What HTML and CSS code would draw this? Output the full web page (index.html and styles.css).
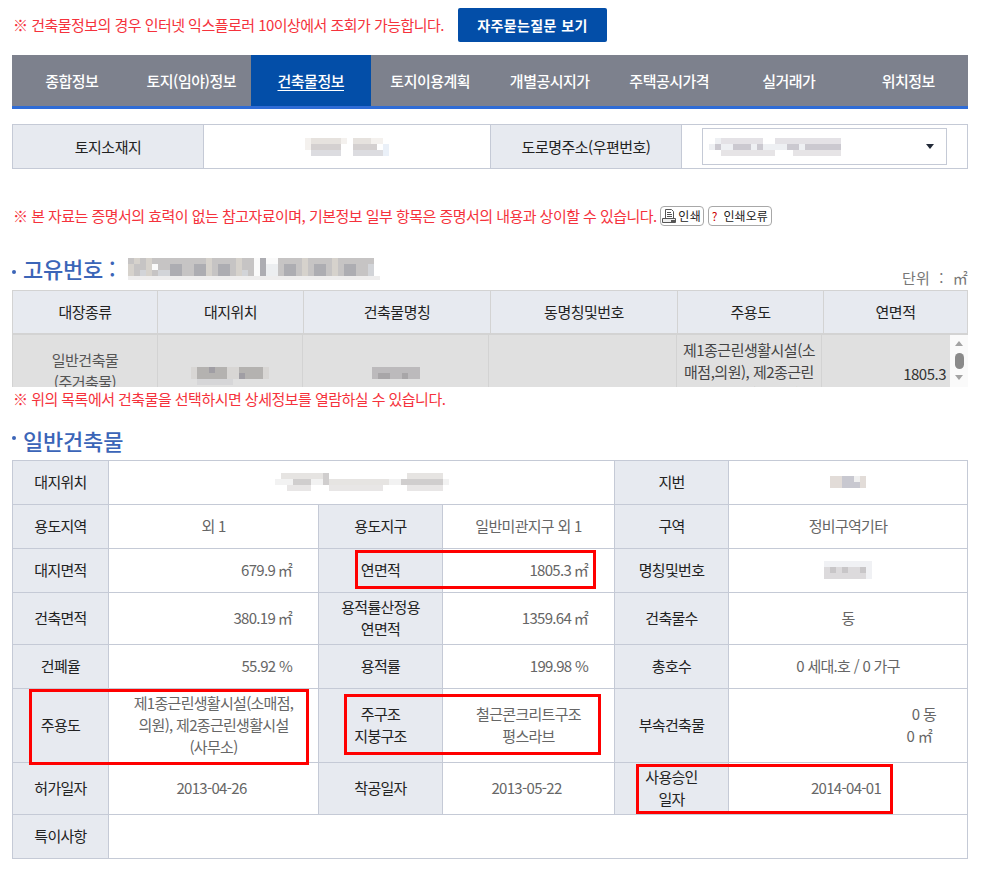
FILE: index.html
```html
<!DOCTYPE html>
<html lang="ko">
<head>
<meta charset="utf-8">
<title>건축물정보</title>
<link rel="stylesheet" href="styles.css">
</head>
<body>
<div class="page">
  <div class="topline">
    <p class="note">※ 건축물정보의 경우 인터넷 익스플로러 10이상에서 조회가 가능합니다.</p>
    <a class="faq">자주묻는질문 보기</a>
  </div>

  <nav class="tabs">
    <a class="tab">종합정보</a>
    <a class="tab">토지(임야)정보</a>
    <a class="tab active">건축물정보</a>
    <a class="tab">토지이용계획</a>
    <a class="tab">개별공시지가</a>
    <a class="tab">주택공시가격</a>
    <a class="tab">실거래가</a>
    <a class="tab">위치정보</a>
  </nav>

  <div class="addr">
    <div class="addr-th">토지소재지</div>
    <div class="addr-td">
      <svg class="mosaic" width="84" height="18" viewBox="0 0 84 18">
        <path fill="#f4f1ee" d="M0 6h6v6H0zM0 0h6v6H0zM36 0h6v6h-6zM66 0h12v6H66z"/>
        <path fill="#e6e2de" d="M6 0h30v6H6zM48 0h18v6H48z"/>
        <path fill="#d4d0d0" d="M6 6h30v6H6zM48 6h24v6H48z"/>
        <path fill="#dcdce0" d="M6 12h30v6H6zM48 12h30v6H48z"/>
        <path fill="#eaf0f8" d="M78 6h6v12h-6z"/>
      </svg>
    </div>
    <div class="addr-th">도로명주소(우편번호)</div>
    <div class="addr-td addr-sel">
      <div class="select">
        <svg class="mosaic mosaic-left" width="138" height="18" viewBox="0 0 138 18">
          <path fill="#eef0f3" d="M0 6h132v6H0zM6 0h12v6H6z"/>
          <path fill="#e4e2e6" d="M12 0h42v6H12zM66 0h66v6H66z"/>
          <path fill="#cbc9d0" d="M6 6h6v6H6zM24 6h18v6H24zM48 6h6v6h-6zM78 6h12v6H78zM96 6h30v6H96zM126 6h6v6h-6z"/>
          <path fill="#e6e4e6" d="M12 12h54v6H12zM84 12h48v6H84z"/>
        </svg>
        <span class="caret"></span>
      </div>
    </div>
  </div>

  <div class="printline">
    <p class="note">※ 본 자료는 증명서의 효력이 없는 참고자료이며, 기본정보 일부 항목은 증명서의 내용과 상이할 수 있습니다.</p>
    <a class="btn btn-print">
      <svg class="printer" width="15" height="15" viewBox="0 0 15 15">
        <path fill="none" stroke="#555" d="M3.5 .5h6l2 2v7h-8zM5 3.5h4M5 5.5h5M5 7.5h5"/>
        <path fill="#eee" stroke="#555" d="M.5 9.5h13v4H.5z"/>
        <path fill="#555" d="M9 11h4v2H9z"/>
      </svg>인쇄</a>
    <a class="btn btn-err"><span class="q">?</span><span>인쇄오류</span></a>
  </div>

  <div class="head-row">
    <h2 class="title title-one"><span class="dot"></span><span>고유번호 :</span><svg class="mosaic title-mosaic" width="252" height="22" viewBox="0 0 252 22">
        <path fill="#eeeded" d="M0 18h252v4H0z"/>
        <path fill="#c6c4c4" d="M0 0h126v18H0zM150 0h96v18h-96z"/>
        <path fill="#d6d2cc" d="M0 6h6v12H0zM6 0h6v6H6zM18 0h6v18h-6zM78 0h6v18h-6zM108 0h6v18h-6zM174 0h6v18h-6zM204 0h6v18h-6z"/>
        <path fill="#fafafa" d="M24 6h6v6h-6zM126 0h6v18h-6zM138 0h12v6h-12z"/>
        <path fill="#eceef0" d="M138 6h12v12h-12z"/>
        <path fill="#d2d4d8" d="M30 12h12v6H30zM12 12h6v6h-6zM114 12h6v6h-6zM240 6h6v12h-6z"/>
        <path fill="#adadb2" d="M42 6h12v12H42zM66 6h12v12H66zM90 6h12v12H90zM132 0h6v18h-6zM156 6h12v12h-12zM186 6h12v12h-12zM216 6h12v12h-12z"/>
      </svg></h2>
    <span class="unit">단위 &nbsp;: &nbsp;㎡</span>
  </div>

  <div class="list-head">
    <div class="lh">대장종류</div>
    <div class="lh">대지위치</div>
    <div class="lh">건축물명칭</div>
    <div class="lh">동명칭및번호</div>
    <div class="lh">주용도</div>
    <div class="lh">연면적</div>
  </div>
  <div class="list-clip">
    <div class="list-body">
      <div class="lb">일반건축물<br>(주거축물)</div>
      <div class="lb lb-low">
        <svg class="mosaic" width="78" height="18" viewBox="0 0 78 18">
          <path fill="#d8d6d4" d="M0 0h78v12H0z"/>
          <path fill="#b4b2b0" d="M6 0h30v12H6zM48 0h24v12H48z"/>
          <path fill="#a09ea4" d="M18 0h6v6h-6zM48 6h6v6h-6z"/>
          <path fill="#d6d6d8" d="M6 12h36v6H6z"/>
        </svg>
      </div>
      <div class="lb lb-mid">
        <svg class="mosaic" width="48" height="12" viewBox="0 0 48 12">
          <path fill="#bcbabc" d="M0 0h48v12H0z"/>
          <path fill="#a8a6a8" d="M6 6h12v6H6zM30 6h6v6h-6z"/>
        </svg>
      </div>
      <div class="lb"></div>
      <div class="lb lb-use">제1종근린생활시설(소<br>매점,의원), 제2종근린<br>생활시설(사무소)</div>
      <div class="lb lb-num">1805.3</div>
    </div>
    <div class="scrollbar">
      <span class="sb-up"></span>
      <span class="sb-thumb"></span>
      <span class="sb-down"></span>
    </div>
  </div>
  <p class="note note-list">※ 위의 목록에서 건축물을 선택하시면 상세정보를 열람하실 수 있습니다.</p>

  <h2 class="title title-two"><span class="dot"></span><span>일반건축물</span></h2>

  <div class="detail-wrap">
    <table class="detail">
      <colgroup>
        <col class="c1"><col class="c2"><col class="c3"><col class="c4"><col class="c5"><col class="c6">
      </colgroup>
      <tr class="h44">
        <th>대지위치</th>
        <td colspan="3">
          <svg class="mosaic" width="174" height="18" viewBox="0 0 174 18">
            <path fill="#f2f2f2" d="M0 6h174v6H0z"/>
            <path fill="#e6e4e2" d="M6 0h48v6H6zM54 6h60v6H54zM132 0h36v6h-36z"/>
            <path fill="#d0cece" d="M48 0h6v12h-6zM126 6h42v6h-42zM18 6h18v6H18z"/>
            <path fill="#e8e6e6" d="M12 12h24v6H12zM54 12h54v6H54zM132 12h36v6h-36z"/>
          </svg>
        </td>
        <th>지번</th>
        <td>
          <svg class="mosaic" width="36" height="12" viewBox="0 0 36 12">
            <path fill="#e2dcd8" d="M0 0h36v12H0z"/>
            <path fill="#c8c8d0" d="M12 0h18v12H12z"/>
            <path fill="#f0f0f0" d="M24 0h6v6h-6z"/>
          </svg>
        </td>
      </tr>
      <tr class="h44">
        <th>용도지역</th>
        <td>외 1</td>
        <th>용도지구</th>
        <td>일반미관지구 외 1</td>
        <th>구역</th>
        <td>정비구역기타</td>
      </tr>
      <tr class="h44">
        <th>대지면적</th>
        <td class="num">679.9 ㎡</td>
        <th>연면적</th>
        <td class="num">1805.3 ㎡</td>
        <th>명칭및번호</th>
        <td>
          <svg class="mosaic" width="48" height="18" viewBox="0 0 48 18">
            <path fill="#f0f1f4" d="M0 0h48v18H0z"/>
            <path fill="#dcdadc" d="M0 6h42v12H0z"/>
            <path fill="#c8c6c8" d="M6 6h6v6H6zM18 6h6v6h-6zM36 6h6v6h-6z"/>
          </svg>
        </td>
      </tr>
      <tr class="h52">
        <th>건축면적</th>
        <td class="num">380.19 ㎡</td>
        <th>용적률산정용<br>연면적</th>
        <td class="num">1359.64 ㎡</td>
        <th>건축물수</th>
        <td>동</td>
      </tr>
      <tr class="h44">
        <th>건폐율</th>
        <td class="num">55.92 %</td>
        <th>용적률</th>
        <td class="num">199.98 %</td>
        <th>총호수</th>
        <td>0 세대.호 / 0 가구</td>
      </tr>
      <tr class="h74">
        <th>주용도</th>
        <td>제1종근린생활시설(소매점,<br>의원), 제2종근린생활시설<br>(사무소)</td>
        <th>주구조<br>지붕구조</th>
        <td>철근콘크리트구조<br>평스라브</td>
        <th>부속건축물</th>
        <td class="num annex">0 동<br><span class="annex-area">0 ㎡</span></td>
      </tr>
      <tr class="h52">
        <th>허가일자</th>
        <td class="date">2013-04-26</td>
        <th>착공일자</th>
        <td class="date">2013-05-22</td>
        <th>사용승인<br>일자</th>
        <td class="date">2014-04-01</td>
      </tr>
      <tr class="h44">
        <th>특이사항</th>
        <td colspan="5"></td>
      </tr>
    </table>
    <span class="mark mark-area"></span>
    <span class="mark mark-use"></span>
    <span class="mark mark-struct"></span>
    <span class="mark mark-date"></span>
  </div>
</div>
</body>
</html>
```

FILE: styles.css
```css
* { box-sizing: border-box; }

html, body {
  margin: 0;
  padding: 0;
  background: #fff;
}

body {
  font-family: "Noto Sans CJK KR", "Noto Sans", sans-serif;
  font-size: 15px;
  line-height: 22px;
  letter-spacing: -0.5px;
  color: #222;
}

.page {
  width: 956px;
  margin-left: 12px;
  padding-top: 8px;
}

.topline {
  display: flex;
  align-items: center;
  height: 34px;
}

.note {
  margin: 0;
  padding-left: 1px;
  color: #f5323c;
  font-size: 15px;
  letter-spacing: -0.53px;
  white-space: nowrap;
}

.faq {
  width: 149px;
  height: 34px;
  margin-left: 14px;
  border-radius: 2px;
  background: #034ea8;
  color: #fff;
  font-size: 14px;
  font-weight: 700;
  letter-spacing: 0.4px;
  line-height: 34px;
  text-align: center;
}

.tabs {
  display: flex;
  height: 54px;
  margin-top: 13px;
  border-bottom: 3px solid #2f6cd6;
  background: #7d818d;
}

.tab {
  flex: 1 1 0;
  color: #fff;
  font-size: 15px;
  font-weight: 500;
  line-height: 51px;
  text-align: center;
}

.tab.active {
  background: #034ea8;
  text-decoration: underline;
  text-underline-offset: 3px;
}

.addr {
  display: grid;
  grid-template-columns: 191px 287px 191px 1fr;
  height: 45px;
  margin-top: 15px;
  border: 1px solid #c5cad6;
}

.addr-th {
  border-right: 1px solid #c5cad6;
  background: #e7eaf0;
  line-height: 43px;
  text-align: center;
}

.addr-td {
  display: flex;
  align-items: center;
  justify-content: center;
  border-right: 1px solid #c5cad6;
}

.addr-td:last-child { border-right: 0; }

.select {
  display: flex;
  align-items: center;
  justify-content: space-between;
  width: 245px;
  height: 37px;
  padding: 0 12px 0 6px;
  border: 1px solid #c5cad6;
}

.caret {
  width: 0;
  height: 0;
  border-top: 5px solid #222a38;
  border-right: 4px solid transparent;
  border-left: 4px solid transparent;
}

.mosaic {
  display: block;
  flex: none;
  margin: 0 auto;
  shape-rendering: crispEdges;
}

.mosaic-left { margin: 0; }

.printline {
  display: flex;
  align-items: center;
  height: 20px;
  margin-top: 37px;
}

.btn {
  display: flex;
  align-items: center;
  justify-content: center;
  height: 20px;
  border: 1px solid #a8a8a8;
  border-radius: 4px;
  color: #222;
  font-size: 12px;
  line-height: 18px;
}

.btn-print {
  width: 44px;
  margin-left: 3px;
  letter-spacing: 0.5px;
}

.btn-err {
  gap: 6px;
  width: 64px;
  margin-left: 4px;
  letter-spacing: 0;
}

.printer { margin-right: 1px; }

.q { color: #c00; }

.head-row {
  display: flex;
  align-items: flex-end;
  justify-content: space-between;
  height: 42px;
  margin-top: 22px;
}

.title {
  display: flex;
  align-items: center;
  margin: 0;
  color: #3b65b8;
  font-size: 22px;
  font-weight: 500;
  letter-spacing: -0.2px;
  line-height: 32px;
  white-space: nowrap;
}

.title-one {
  align-self: flex-start;
  margin-top: 4px;
}

.dot {
  width: 4px;
  height: 4px;
  margin: 8px 7px 0 0;
  border-radius: 50%;
  background: #3b65b8;
}

.title-two .dot { margin-top: -4px; }

.title-mosaic {
  margin: 2px 0 0 12px;
}

.unit {
  margin-bottom: 2px;
  color: #777;
  letter-spacing: 0.3px;
  line-height: 20px;
  white-space: nowrap;
}

.list-head {
  display: grid;
  grid-template-columns: 145px 146px 187px 187px 146px 1fr;
  height: 45px;
  border: 1px solid #d3d3d3;
  border-bottom-width: 2px;
  background: #e7eaf0;
}

.lh {
  border-right: 1px solid #d3d3d3;
  line-height: 42px;
  text-align: center;
}

.lh:last-child { border-right: 0; }

.list-clip {
  display: flex;
  height: 52px;
  overflow: hidden;
}

.list-body {
  display: grid;
  flex: 1 1 auto;
  grid-template-columns: 146px 145px 186px 188px 145px 1fr;
  align-items: stretch;
  height: 72px;
  background: #e0e0e0;
  color: #555;
}

.lb {
  display: flex;
  align-items: center;
  justify-content: center;
  padding: 0 6px;
  border-right: 1px solid #d3d3d3;
  text-align: center;
}

.lb:first-child { border-left: 1px solid #d3d3d3; }

.lb:last-child { border-right: 0; }

.lb-low { padding-top: 10px; }

.lb-mid { padding-top: 3px; }

.lb-use {
  align-items: flex-start;
  padding: 4px 2px 0;
  color: #444;
  white-space: nowrap;
}

.lb-num {
  justify-content: flex-end;
  padding-top: 6px;
  padding-right: 4px;
  color: #333;
}

.scrollbar {
  flex: 0 0 18px;
  display: flex;
  flex-direction: column;
  align-items: center;
  background: #fafafa;
}

.sb-up, .sb-down {
  width: 0;
  height: 0;
  border-right: 4px solid transparent;
  border-left: 4px solid transparent;
}

.sb-up {
  margin-top: 6px;
  border-bottom: 5px solid #a3a3a3;
}

.sb-thumb {
  width: 9px;
  height: 16px;
  margin-top: 7px;
  border-radius: 5px;
  background: #8a8a8a;
}

.sb-down {
  margin-top: 6px;
  border-top: 5px solid #a3a3a3;
}

.note-list {
  margin-top: 1px;
}

.title-two {
  margin-top: 14px;
  margin-bottom: 4px;
}

.detail-wrap {
  position: relative;
}

.detail {
  width: 955px;
  border-collapse: collapse;
  table-layout: fixed;
  letter-spacing: -0.7px;
}

.c1 { width: 96px; }
.c2 { width: 210px; }
.c3 { width: 124px; }
.c4 { width: 172px; }
.c5 { width: 114px; }
.c6 { width: 239px; }

.detail th,
.detail td {
  padding: 0 0 2px;
  border: 1px solid #c5cad6;
  text-align: center;
}

.detail th {
  background: #e7eaf0;
  color: #222;
  font-weight: 400;
}

.detail td { color: #666; }

.detail td.num {
  padding-right: 26px;
  text-align: right;
}

.detail td.date { padding-right: 4px; }

.detail td.annex { padding-right: 31px; }

.annex-area { padding-right: 4px; }

.h44 { height: 44px; }
.h52 { height: 52px; }
.h74 { height: 74px; }

.mark {
  position: absolute;
  border: 3px solid #f00;
}

.mark-area { left: 343px; top: 90px; width: 241px; height: 39px; }
.mark-use { left: 17px; top: 229px; width: 280px; height: 76px; }
.mark-struct { left: 332px; top: 234px; width: 257px; height: 61px; }
.mark-date { left: 624px; top: 304px; width: 257px; height: 50px; }
```
